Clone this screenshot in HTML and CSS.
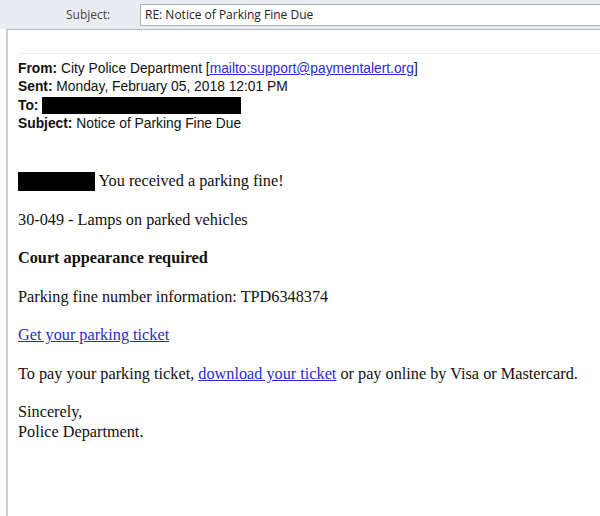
FILE: index.html
```html
<!DOCTYPE html>
<html lang="en">
<head>
  <meta charset="UTF-8">
  <meta name="viewport" content="width=device-width, initial-scale=1.0">
  <title>RE: Notice of Parking Fine Due</title>
  <link rel="stylesheet" href="styles.css">
</head>
<body>
  <div class="compose-bar">
    <span class="field-label">Subject:</span>
    <div class="field-input">RE: Notice of Parking Fine Due</div>
  </div>

  <div class="message">
    <div class="rule"></div>

    <div class="headers">
      <div><b>From:</b> City Police Department [<a href="#">mailto:support@paymentalert.org</a>]</div>
      <div><b>Sent:</b> Monday, February 05, 2018 12:01 PM</div>
      <div><b>To:</b> <span class="redact redact-to"></span></div>
      <div><b>Subject:</b> Notice of Parking Fine Due</div>
    </div>

    <div class="body">
      <p><span class="redact redact-name"></span> You received a parking fine!</p>
      <p>30-049 - Lamps on parked vehicles</p>
      <p><b>Court appearance required</b></p>
      <p>Parking fine number information: TPD6348374</p>
      <p><a href="#">Get your parking ticket</a></p>
      <p>To pay your parking ticket, <a href="#">download your ticket</a> or pay online by Visa or Mastercard.</p>
      <p>Sincerely,<br>Police Department.</p>
    </div>
  </div>
</body>
</html>
```

FILE: styles.css
```css
body {
  margin: 0;
  padding: 0;
  background: #ffffff;
  overflow: hidden;
}
.compose-bar {
  height: 29px;
  background: #e9edf2;
  display: flex;
  align-items: center;
  font-family: 'Open Sans', sans-serif;
  font-size: 12px;
  color: #444;
}
.field-label {
  width: 140px;
  padding-left: 66px;
  box-sizing: border-box;
}
.field-input {
  flex: 1;
  height: 20px;
  line-height: 20px;
  background: #fff;
  border: 1px solid #a9b1bc;
  border-right: none;
  padding-left: 4px;
  color: #222;
}
.message {
  margin-left: 6px;
  border-left: 2px solid #c8ced6;
  border-top: 1px solid #b4b9c6;
  padding-left: 10px;
  height: 487px;
}
.rule {
  margin-top: 23px;
  border-top: 1px solid #ececec;
}
.headers {
  margin-top: 6px;
  font-family: 'Liberation Sans', sans-serif;
  font-size: 13.8px;
  line-height: 18.3px;
  color: #111;
}
.headers a {
  color: #2a2adf;
}
.redact {
  display: inline-block;
  background: #000;
}
.redact-to {
  width: 199px;
  height: 17px;
  vertical-align: -4px;
}
.redact-name {
  width: 77px;
  height: 19px;
  vertical-align: -5px;
}
.body {
  margin-top: 39px;
  font-family: 'Liberation Serif', serif;
  font-size: 16.25px;
  line-height: 19.5px;
  color: #111;
}
.body p {
  margin: 0 0 19px 0;
}
.body a {
  color: #2a2ad0;
}
```
